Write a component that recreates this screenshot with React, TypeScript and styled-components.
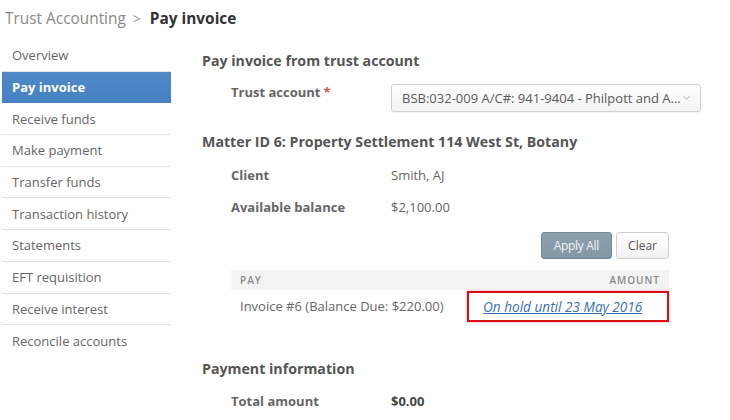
import React from "react";
import styled, { createGlobalStyle } from "styled-components";
import { ChevronDown } from "lucide-react";

const Global = createGlobalStyle`
  html, body { margin: 0; padding: 0; background: #fff; }
  body { font-family: "Open Sans", "Liberation Sans", sans-serif; color: #555; }
  * { box-sizing: border-box; }
`;

const Page = styled.div`
  width: 730px;
  height: 420px;
  overflow: hidden;
  display: flex;
  flex-direction: column;
`;

const Breadcrumb = styled.div`
  height: 40px;
  padding: 8px 0 0 5px;
  font-size: 15.4px;
  line-height: 22px;
  color: #888;
  display: flex;
  align-items: baseline;
  gap: 7px;
`;

const Crumb = styled.span<{ $current?: boolean }>`
  color: ${(p) => (p.$current ? "#333" : "#888")};
  font-weight: ${(p) => (p.$current ? 700 : 400)};
`;

const Sep = styled.span`
  color: #999;
  font-size: 14px;
  margin-right: 2px;
`;

const Body = styled.div`
  display: flex;
`;

const Sidebar = styled.nav`
  margin-left: 2px;
  width: 169px;
  display: flex;
  flex-direction: column;
`;

const NavItem = styled.div<{ $active?: boolean; $last?: boolean }>`
  height: 31.7px;
  padding-left: 10px;
  display: flex;
  align-items: center;
  font-size: 13px;
  color: ${(p) => (p.$active ? "#fff" : "#666")};
  font-weight: ${(p) => (p.$active ? 700 : 400)};
  background: ${(p) => (p.$active ? "linear-gradient(#4f89c8, #4681c2)" : "transparent")};
  border-bottom: 1px solid ${(p) => (p.$last ? "transparent" : p.$active ? "#4681c2" : "#e2e2e2")};
`;

const Main = styled.main`
  margin-left: 31px;
  width: 500px;
  display: flex;
  flex-direction: column;
`;

const Heading = styled.h2<{ $mt: number }>`
  margin: ${(p) => p.$mt}px 0 0 0;
  font-size: 14.2px;
  line-height: 20px;
  font-weight: 700;
  color: #555;
`;

const FieldRow = styled.div<{ $mt: number }>`
  margin-top: ${(p) => p.$mt}px;
  padding-left: 29px;
  display: flex;
  align-items: flex-start;
`;

const Label = styled.div`
  width: 160px;
  font-size: 13px;
  line-height: 20px;
  font-weight: 700;
  color: #666;
`;

const LabelTop = styled(Label)`
  line-height: 16px;
`;

const Required = styled.span`
  color: #d9534f;
  margin-left: 3px;
`;

const Value = styled.div<{ $strong?: boolean }>`
  font-size: 13px;
  line-height: 20px;
  color: ${(p) => (p.$strong ? "#444" : "#666")};
  font-weight: ${(p) => (p.$strong ? 700 : 400)};
`;

const Select = styled.div`
  width: 310px;
  height: 28px;
  border: 1px solid #cfcfcf;
  border-radius: 3px;
  background: linear-gradient(#ffffff, #f3f3f3);
  box-shadow: 0 1px 1px rgba(0, 0, 0, 0.05);
  display: flex;
  align-items: center;
  justify-content: space-between;
  padding: 0 8px 0 10px;
  font-size: 13px;
  color: #5a5a5a;
  white-space: nowrap;
`;

const Section = styled.div`
  padding-left: 29px;
  width: 467px;
  display: flex;
  flex-direction: column;
`;

const ButtonBar = styled.div`
  margin-top: 15px;
  display: flex;
  justify-content: flex-end;
  gap: 4px;
`;

const Button = styled.button<{ $primary?: boolean }>`
  height: 27px;
  padding: 0 ${(p) => (p.$primary ? 12 : 11)}px;
  font-family: inherit;
  font-size: 12px;
  border-radius: 3px;
  border: 1px solid ${(p) => (p.$primary ? "#71889a" : "#d0d0d0")};
  background: ${(p) => (p.$primary ? "linear-gradient(#8ea1ae, #8397a5)" : "linear-gradient(#ffffff, #f2f2f2)")};
  color: ${(p) => (p.$primary ? "#eef3f6" : "#555")};
  letter-spacing: ${(p) => (p.$primary ? "-0.3px" : "0")};
`;

const TableHead = styled.div`
  margin-top: 11px;
  height: 20px;
  background: #f3f3f3;
  display: flex;
  align-items: center;
  justify-content: space-between;
  padding: 0 9px;
  font-size: 10px;
  font-weight: 600;
  letter-spacing: 1px;
  color: #8a8a8a;
`;

const TableRow = styled.div`
  height: 32px;
  display: flex;
  align-items: center;
  justify-content: space-between;
  padding-left: 9px;
`;

const Cell = styled.div`
  font-size: 13px;
  color: #666;
`;

const Highlight = styled.div`
  width: 202px;
  height: 31px;
  border: 2px solid #d40f16;
  box-shadow: 0 0 2px rgba(212, 15, 22, 0.5);
  display: flex;
  align-items: center;
  padding-left: 14px;
`;

const HoldLink = styled.a`
  font-size: 13.6px;
  font-style: italic;
  color: #3d6fb0;
  text-decoration: underline;
`;

const navItems = [
  "Overview",
  "Pay invoice",
  "Receive funds",
  "Make payment",
  "Transfer funds",
  "Transaction history",
  "Statements",
  "EFT requisition",
  "Receive interest",
  "Reconcile accounts",
];

export default function App() {
  return (
    <Page>
      <Global />
      <Breadcrumb>
        <Crumb>Trust Accounting</Crumb>
        <Sep>&gt;</Sep>
        <Crumb $current>Pay invoice</Crumb>
      </Breadcrumb>
      <Body>
        <Sidebar>
          {navItems.map((n, i) => (
            <NavItem key={n} $active={n === "Pay invoice"} $last={i === navItems.length - 1}>
              {n}
            </NavItem>
          ))}
        </Sidebar>
        <Main>
          <Heading $mt={11}>Pay invoice from trust account</Heading>
          <FieldRow $mt={13}>
            <LabelTop>
              Trust account<Required>*</Required>
            </LabelTop>
            <Select>
              <span>BSB:032-009 A/C#: 941-9404 - Philpott and A...</span>
              <ChevronDown size={12} color="#9a9a9a" strokeWidth={2} />
            </Select>
          </FieldRow>
          <Heading $mt={20}>Matter ID 6: Property Settlement 114 West St, Botany</Heading>
          <FieldRow $mt={13}>
            <Label>Client</Label>
            <Value>Smith, AJ</Value>
          </FieldRow>
          <FieldRow $mt={12}>
            <Label>Available balance</Label>
            <Value>$2,100.00</Value>
          </FieldRow>
          <Section>
            <ButtonBar>
              <Button $primary>Apply All</Button>
              <Button>Clear</Button>
            </ButtonBar>
            <TableHead>
              <span>PAY</span>
              <span>AMOUNT</span>
            </TableHead>
            <TableRow>
              <Cell>Invoice #6 (Balance Due: $220.00)</Cell>
              <Highlight>
                <HoldLink href="#">On hold until 23 May 2016</HoldLink>
              </Highlight>
            </TableRow>
          </Section>
          <Heading $mt={37}>Payment information</Heading>
          <FieldRow $mt={12}>
            <Label>Total amount</Label>
            <Value $strong>$0.00</Value>
          </FieldRow>
        </Main>
      </Body>
    </Page>
  );
}
